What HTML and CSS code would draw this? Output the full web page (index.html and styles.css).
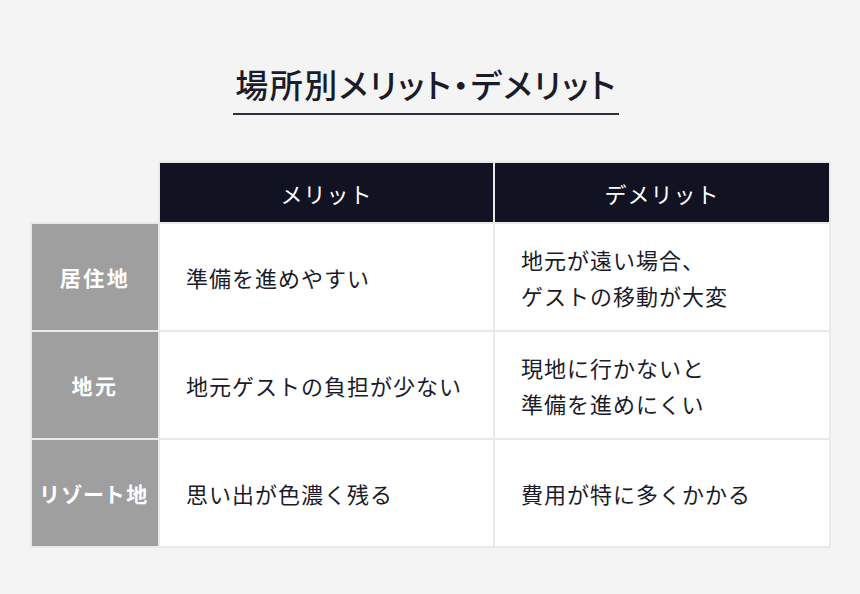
FILE: index.html
```html
<!DOCTYPE html>
<html lang="ja">
<head>
<meta charset="utf-8">
<link rel="stylesheet" href="styles.css">
</head>
<body>
<div class="page">
  <h1 class="title">場所別メリット・デメリット</h1>
  <table class="cmp">
    <thead>
      <tr>
        <th class="corner"></th>
        <th class="head merit">メリット</th>
        <th class="head demerit">デメリット</th>
      </tr>
    </thead>
    <tbody>
      <tr>
        <th class="label">居住地</th>
        <td class="cell">準備を進めやすい</td>
        <td class="cell">地元が遠い場合、<br>ゲストの移動が大変</td>
      </tr>
      <tr>
        <th class="label">地元</th>
        <td class="cell">地元ゲストの負担が少ない</td>
        <td class="cell">現地に行かないと<br>準備を進めにくい</td>
      </tr>
      <tr>
        <th class="label">リゾート地</th>
        <td class="cell">思い出が色濃く残る</td>
        <td class="cell">費用が特に多くかかる</td>
      </tr>
    </tbody>
  </table>
</div>
</body>
</html>
```

FILE: styles.css
```css
html, body {
  margin: 0;
  padding: 0;
  background: #f4f4f4;
}
body {
  font-family: "Noto Sans CJK JP", "Noto Sans", sans-serif;
  color: #1b1c2a;
}
.page {
  width: 860px;
  height: 594px;
  display: flex;
  flex-direction: column;
  align-items: center;
}
.title {
  margin: 60px 8px 0 0;
  padding: 0 2px 5px 2px;
  font-size: 33px;
  font-weight: 500;
  line-height: 48px;
  letter-spacing: 1.6px;
  color: #1b1c2a;
  font-feature-settings: "palt";
  border-bottom: 2px solid #2e2f3d;
}
.cmp {
  margin-top: 46px;
  border-collapse: collapse;
  table-layout: fixed;
  align-self: flex-start;
  margin-left: 30px;
}
.cmp th, .cmp td {
  border: 2px solid #e9e9e9;
  padding: 0;
}
.cmp .corner {
  border: none;
  width: 127px;
  background: transparent;
}
.head {
  background: #111322;
  color: #fff;
  font-size: 22px;
  font-weight: 400;
  height: 59px;
  letter-spacing: 1px;
}
.merit { width: 333px; }
.demerit { width: 334px; }
.label {
  background: #9f9f9f;
  color: #fff;
  font-size: 21px;
  font-weight: 700;
  letter-spacing: 2.5px;
  font-feature-settings: "palt";
  height: 106px;
  text-align: center;
  white-space: nowrap;
}
.cell {
  background: #fff;
  font-size: 22px;
  line-height: 36px;
  letter-spacing: 1px;
  padding-left: 26px !important;
  vertical-align: middle;
  color: #1b1c2a;
}
```
